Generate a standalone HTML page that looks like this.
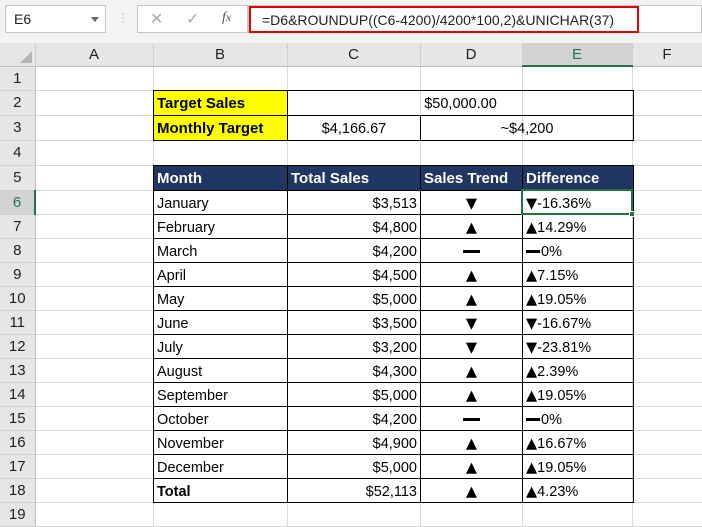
<!DOCTYPE html>
<html><head><meta charset="utf-8"><style>
*{margin:0;padding:0;box-sizing:border-box}
body{width:702px;height:524px;overflow:hidden;background:#fff;font-family:"Liberation Sans","DejaVu Sans",sans-serif;position:relative}
.top{position:absolute;left:0;top:0;width:702px;height:43px;background:#f3f3f3}
.box{position:absolute;background:#fff;border:1px solid #c6c6c6}
.abs{position:absolute}
table{border-collapse:collapse;table-layout:fixed;position:absolute}
#grid td{border-right:1px solid #d8d8d8;border-bottom:1px solid #d8d8d8;padding:0}
#grid td.rh{background:#e6e6e6;border-right:1px solid #bdbdbd;border-bottom:1px solid #d0d0d0;text-align:center;font-size:15px;color:#222}
#grid tr.ch td{background:#e6e6e6;border-bottom:1px solid #bdbdbd;border-right:1px solid #cfcfcf;text-align:center;font-size:15px;color:#222}
.dt td{border:1px solid #000;font-size:14.5px;line-height:16px;padding:2px 3px 0;white-space:nowrap;color:#000;overflow:hidden}
.y{background:#ffff00;font-weight:bold;font-size:15px!important}
.c{text-align:center}.r{text-align:right}
.hd td{background:#203764;color:#fff;font-weight:bold;font-size:15px}
.t{font-family:"DejaVu Sans",sans-serif;font-size:14.5px;line-height:14px}
.dash{display:inline-block;width:17px;height:3px;background:#000;vertical-align:middle}
.dash2{display:inline-block;width:14px;height:3px;background:#000;vertical-align:middle;margin-right:1px}
</style></head><body>
<div class="top"></div>
<div class="box" style="left:5px;top:5px;width:101px;height:28px;font-size:14px;padding:5px 0 0 8px;color:#222">E6<span style="position:absolute;right:6px;top:11px;border-left:4px solid transparent;border-right:4px solid transparent;border-top:5px solid #666"></span></div>
<div class="abs" style="left:121px;top:12px;color:#aaa;font-size:11px;line-height:4px">·<br>·<br>·</div>
<div class="box" style="left:137px;top:5px;width:111px;height:28px;color:#aaa;font-size:16px"><span class="abs" style="left:12px;top:3px">✕</span><span class="abs" style="left:48px;top:3px">✓</span><span class="abs" style="left:84px;top:4px;font-family:'Liberation Serif',serif;font-style:italic;color:#555;font-size:14px">f<small>x</small></span></div>
<div class="box" style="left:248px;top:5px;width:454px;height:28px"></div>
<div class="abs" style="left:249px;top:6px;width:390px;height:27px;border:2px solid #e00000;font-size:14px;padding:4px 0 0 11px;color:#222">=D6&amp;ROUNDUP((C6-4200)/4200*100,2)&amp;UNICHAR(37)</div>

<table id="grid" style="left:0;top:43px;width:702px">
<colgroup><col style="width:35px"><col style="width:118px"><col style="width:134px"><col style="width:133px"><col style="width:102px"><col style="width:110px"><col style="width:70px"></colgroup>
<tr class="ch" style="height:23px"><td style="position:relative"><span class="abs" style="right:3px;bottom:3px;border-left:12px solid transparent;border-bottom:12px solid #b5b5b5"></span></td><td>A</td><td>B</td><td>C</td><td>D</td><td style="background:#d2d2d2;color:#217346;border-bottom:2px solid #217346">E</td><td>F</td></tr>
<tr style="height:24px"><td class="rh">1</td><td></td><td></td><td></td><td></td><td></td><td></td></tr>
<tr style="height:25px"><td class="rh">2</td><td></td><td></td><td></td><td></td><td></td><td></td></tr>
<tr style="height:25px"><td class="rh">3</td><td></td><td></td><td></td><td></td><td></td><td></td></tr>
<tr style="height:25px"><td class="rh">4</td><td></td><td></td><td></td><td></td><td></td><td></td></tr>
<tr style="height:25px"><td class="rh">5</td><td></td><td></td><td></td><td></td><td></td><td></td></tr>
<tr style="height:24px"><td class="rh" style="background:#d2d2d2;color:#217346;border-right:2px solid #217346">6</td><td></td><td></td><td></td><td></td><td></td><td></td></tr>
<tr style="height:24px"><td class="rh">7</td><td></td><td></td><td></td><td></td><td></td><td></td></tr>
<tr style="height:24px"><td class="rh">8</td><td></td><td></td><td></td><td></td><td></td><td></td></tr>
<tr style="height:24px"><td class="rh">9</td><td></td><td></td><td></td><td></td><td></td><td></td></tr>
<tr style="height:24px"><td class="rh">10</td><td></td><td></td><td></td><td></td><td></td><td></td></tr>
<tr style="height:24px"><td class="rh">11</td><td></td><td></td><td></td><td></td><td></td><td></td></tr>
<tr style="height:24px"><td class="rh">12</td><td></td><td></td><td></td><td></td><td></td><td></td></tr>
<tr style="height:24px"><td class="rh">13</td><td></td><td></td><td></td><td></td><td></td><td></td></tr>
<tr style="height:24px"><td class="rh">14</td><td></td><td></td><td></td><td></td><td></td><td></td></tr>
<tr style="height:24px"><td class="rh">15</td><td></td><td></td><td></td><td></td><td></td><td></td></tr>
<tr style="height:24px"><td class="rh">16</td><td></td><td></td><td></td><td></td><td></td><td></td></tr>
<tr style="height:24px"><td class="rh">17</td><td></td><td></td><td></td><td></td><td></td><td></td></tr>
<tr style="height:24px"><td class="rh">18</td><td></td><td></td><td></td><td></td><td></td><td></td></tr>
<tr style="height:24px"><td class="rh">19</td><td></td><td></td><td></td><td></td><td></td><td></td></tr>
</table>

<table class="dt" style="left:153px;top:90px;width:480px">
<colgroup><col style="width:134px"><col style="width:133px"><col style="width:102px"><col style="width:111px"></colgroup>
<tr style="height:25px"><td class="y">Target Sales</td><td colspan="3" class="c">$50,000.00</td></tr>
<tr style="height:25px"><td class="y">Monthly Target</td><td class="c">$4,166.67</td><td colspan="2" class="c">~$4,200</td></tr>
</table>

<table class="dt" style="left:153px;top:165px;width:480px">
<colgroup><col style="width:134px"><col style="width:133px"><col style="width:102px"><col style="width:111px"></colgroup>
<tr class="hd" style="height:25px"><td>Month</td><td>Total Sales</td><td>Sales Trend</td><td>Difference</td></tr>
<tr style="height:24px"><td>January</td><td class="r">$3,513</td><td class="c"><span class="t">▼</span></td><td><span class="t">▼</span>-16.36%</td></tr>
<tr style="height:24px"><td>February</td><td class="r">$4,800</td><td class="c"><span class="t">▲</span></td><td><span class="t">▲</span>14.29%</td></tr>
<tr style="height:24px"><td>March</td><td class="r">$4,200</td><td class="c"><span class="dash"></span></td><td><span class="dash2"></span>0%</td></tr>
<tr style="height:24px"><td>April</td><td class="r">$4,500</td><td class="c"><span class="t">▲</span></td><td><span class="t">▲</span>7.15%</td></tr>
<tr style="height:24px"><td>May</td><td class="r">$5,000</td><td class="c"><span class="t">▲</span></td><td><span class="t">▲</span>19.05%</td></tr>
<tr style="height:24px"><td>June</td><td class="r">$3,500</td><td class="c"><span class="t">▼</span></td><td><span class="t">▼</span>-16.67%</td></tr>
<tr style="height:24px"><td>July</td><td class="r">$3,200</td><td class="c"><span class="t">▼</span></td><td><span class="t">▼</span>-23.81%</td></tr>
<tr style="height:24px"><td>August</td><td class="r">$4,300</td><td class="c"><span class="t">▲</span></td><td><span class="t">▲</span>2.39%</td></tr>
<tr style="height:24px"><td>September</td><td class="r">$5,000</td><td class="c"><span class="t">▲</span></td><td><span class="t">▲</span>19.05%</td></tr>
<tr style="height:24px"><td>October</td><td class="r">$4,200</td><td class="c"><span class="dash"></span></td><td><span class="dash2"></span>0%</td></tr>
<tr style="height:24px"><td>November</td><td class="r">$4,900</td><td class="c"><span class="t">▲</span></td><td><span class="t">▲</span>16.67%</td></tr>
<tr style="height:24px"><td>December</td><td class="r">$5,000</td><td class="c"><span class="t">▲</span></td><td><span class="t">▲</span>19.05%</td></tr>
<tr style="height:24px"><td style="font-weight:bold">Total</td><td class="r">$52,113</td><td class="c"><span class="t">▲</span></td><td><span class="t">▲</span>4.23%</td></tr>
</table>

<div class="abs" style="left:521px;top:189px;width:112px;height:26px;border:2px solid #217346"></div>
<div class="abs" style="left:629px;top:211px;width:6px;height:6px;background:#217346;border:1px solid #fff"></div>
</body></html>
